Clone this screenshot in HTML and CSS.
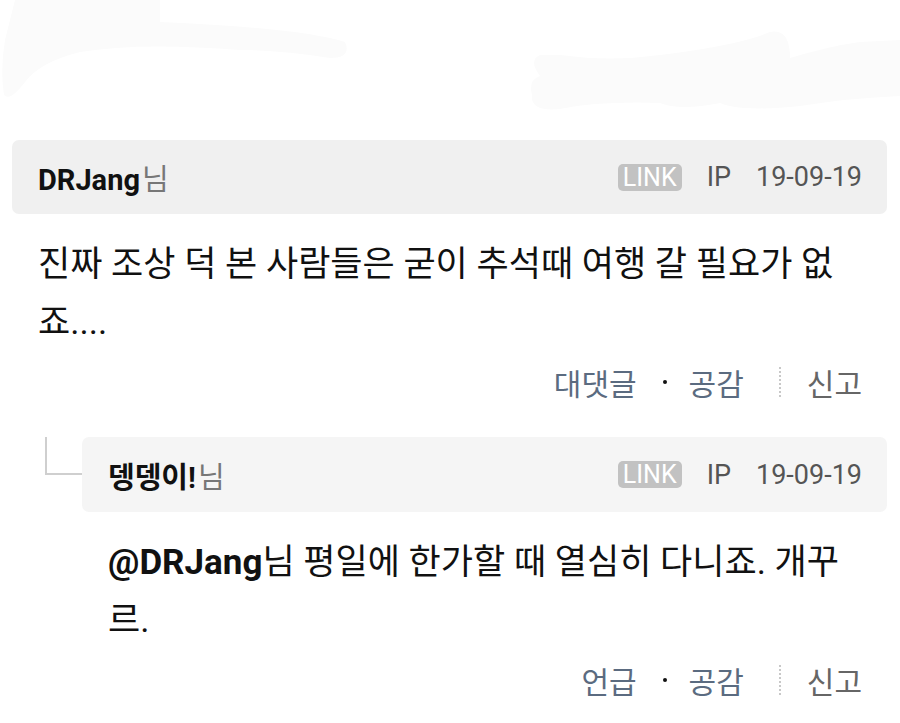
FILE: index.html
```html
<!DOCTYPE html>
<html lang="ko">
<head>
  <meta charset="UTF-8">
  <title>댓글</title>
  <link rel="stylesheet" href="styles.css">
</head>
<body>
  <div class="smudge">
    <svg width="900" height="130" viewBox="0 0 900 130">
      <path fill="#fbfbfb" d="M15,0 L160,0 L160,22 Q300,28 345,42 Q352,58 330,58 Q280,50 240,50 Q140,42 80,52 Q40,62 25,82 Q10,102 4,95 Q0,70 5,40 Z"/>
      <path fill="#fbfbfb" d="M560,55 Q610,62 660,55 Q740,45 770,32 Q790,28 790,58 Q830,46 860,42 L900,40 L900,96 Q850,98 800,106 Q740,112 720,103 Q680,111 660,103 Q600,101 560,109 Q530,112 532,95 Q528,80 540,76 Q528,60 540,55 Z"/>
    </svg>
  </div>

  <div class="comment">
    <div class="head">
      <span class="name">DRJang<em>님</em></span>
      <span class="meta">
        <span class="link">LINK</span>
        <span>IP</span>
        <span>19-09-19</span>
      </span>
    </div>
    <p class="text">진짜 조상 덕 본 사람들은 굳이 추석때 여행 갈 필요가 없죠....</p>
    <div class="actions">
      <a href="#">대댓글</a>
      <span class="dot"></span>
      <a href="#">공감</a>
      <span class="bar"></span>
      <a href="#" class="report">신고</a>
    </div>

    <div class="reply">
      <div class="reply-row">
        <span class="elbow"></span>
        <div class="head head-light">
          <span class="name">뎅뎅이!<em>님</em></span>
          <span class="meta">
            <span class="link">LINK</span>
            <span>IP</span>
            <span>19-09-19</span>
          </span>
        </div>
      </div>
      <div class="reply-body">
        <p class="text"><b>@DRJang</b>님 평일에 한가할 때 열심히 다니죠. 개꾸르.</p>
        <div class="actions">
          <a href="#">언급</a>
          <span class="dot"></span>
          <a href="#">공감</a>
          <span class="bar"></span>
          <a href="#" class="report">신고</a>
        </div>
      </div>
    </div>
  </div>
</body>
</html>
```

FILE: styles.css
```css
body {
  margin: 0;
  background: #fff;
  font-family: Roboto, "Noto Sans CJK KR", sans-serif;
  color: #111;
}
.smudge {
  height: 140px;
}
.smudge svg {
  display: block;
}
.comment {
  padding: 0 13px 0 12px;
}
.head {
  display: flex;
  align-items: center;
  justify-content: space-between;
  height: 74px;
  padding: 0 25px 0 26px;
  background: #f0f0f0;
  border-radius: 7px;
}
.head-light {
  flex: 1;
  height: 75px;
  background: #f5f5f5;
}
.name {
  font-size: 29px;
  font-weight: bold;
  color: #111;
}
.name em {
  font-style: normal;
  font-weight: normal;
  color: #777;
  margin-left: 2px;
}
.meta {
  display: flex;
  align-items: center;
  gap: 25px;
  font-size: 27px;
  color: #555;
}
.link {
  background: #c2c2c2;
  color: #fff;
  font-size: 25px;
  line-height: 27px;
  padding: 0 5px;
  border-radius: 5px;
}
.text {
  margin: 22px 0 0 26px;
  padding-right: 26px;
  font-size: 35px;
  line-height: 58px;
  word-break: break-all;
}
.text b {
  font-weight: bold;
}
.actions {
  display: flex;
  align-items: center;
  justify-content: flex-end;
  height: 40px;
  margin-top: 10px;
  padding-right: 25px;
  font-size: 30px;
}
.actions a {
  color: #5b6b80;
  text-decoration: none;
}
.actions a.report {
  color: #666;
}
.dot {
  width: 4px;
  height: 4px;
  margin: 0 22px 0 26px;
  border-radius: 50%;
  background: #111;
}
.bar {
  width: 0;
  height: 30px;
  margin: 0 26px 0 35px;
  border-left: 2px dotted #c8c8c8;
}
.reply {
  margin-top: 35px;
}
.reply-row {
  display: flex;
  align-items: flex-start;
}
.elbow {
  width: 35px;
  height: 36px;
  margin-left: 33px;
  border-left: 2px solid #cfcfcf;
  border-bottom: 2px solid #cfcfcf;
}
.reply-body {
  margin-left: 70px;
}
```
